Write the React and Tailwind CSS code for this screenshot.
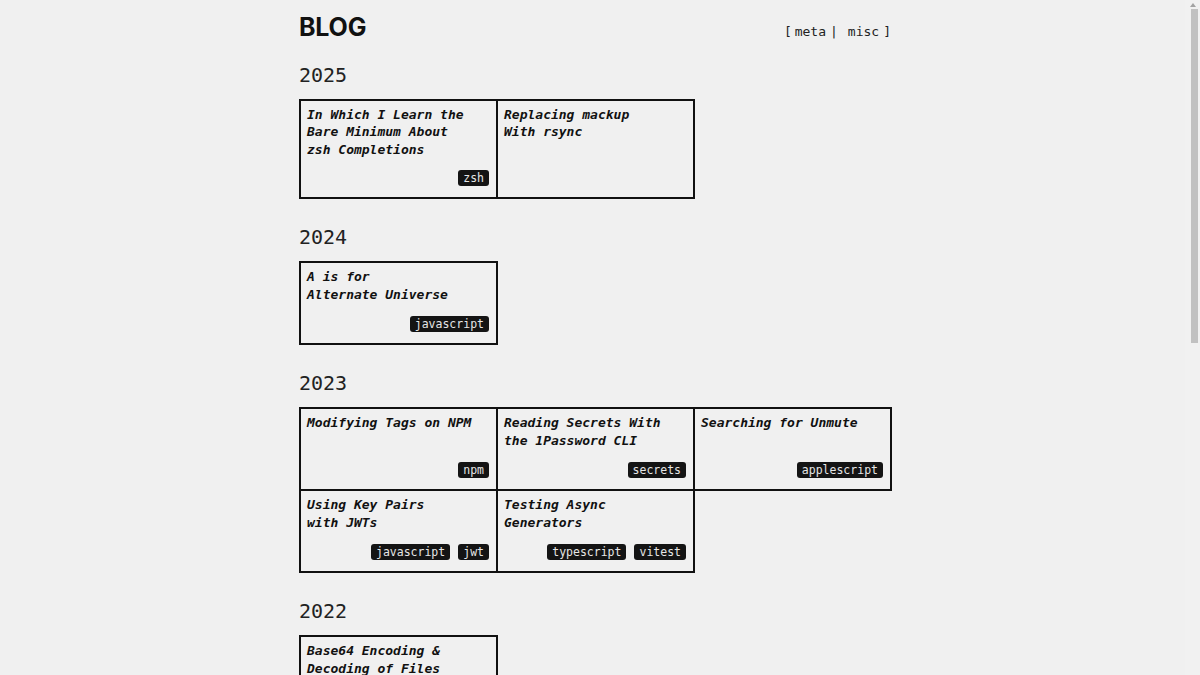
import React from 'react';

const mono = "font-['DejaVu_Sans_Mono',monospace]";

const years = [
  {
    year: '2025',
    posts: [
      { title: ['In Which I Learn the', 'Bare Minimum About', 'zsh Completions'], tags: ['zsh'] },
      { title: ['Replacing mackup', 'With rsync'], tags: [] },
    ],
  },
  {
    year: '2024',
    posts: [{ title: ['A is for', 'Alternate Universe'], tags: ['javascript'] }],
  },
  {
    year: '2023',
    posts: [
      { title: ['Modifying Tags on NPM'], tags: ['npm'] },
      { title: ['Reading Secrets With', 'the 1Password CLI'], tags: ['secrets'] },
      { title: ['Searching for Unmute'], tags: ['applescript'] },
      { title: ['Using Key Pairs', 'with JWTs'], tags: ['javascript', 'jwt'] },
      { title: ['Testing Async', 'Generators'], tags: ['typescript', 'vitest'] },
    ],
  },
  {
    year: '2022',
    posts: [{ title: ['Base64 Encoding &', 'Decoding of Files'], tags: ['base64'] }],
  },
];

const Tag = ({ name }) => (
  <span className={`${mono} h-[16px] rounded-[3px] bg-[#141414] px-[5px] text-[11.5px] leading-[16px] text-[#e6e6e6]`}>
    {name}
  </span>
);

const PostCard = ({ post }) => (
  <a
    href="#"
    className="-mb-[2px] -mr-[2px] flex min-h-[84px] flex-col justify-between border-2 border-[#111] pb-[11px] pl-[6px] pr-[7px] pt-[5px]"
  >
    <h3 className={`${mono} text-[13px] font-bold italic leading-[17.5px] text-[#111]`}>
      {post.title.map((line, i) => (
        <span key={i} className="block whitespace-nowrap">
          {line}
        </span>
      ))}
    </h3>
    {post.tags.length > 0 && (
      <div className="mt-[12px] flex justify-end gap-[8px]">
        {post.tags.map((t) => (
          <Tag key={t} name={t} />
        ))}
      </div>
    )}
  </a>
);

export default function App() {
  return (
    <div className="min-h-screen bg-[#f0f0f0] pr-[10px] text-[#111]">
      <div className="mx-auto w-[592px] pb-[600px] pt-[14px]">
        {/* Header */}
        <header className="flex items-baseline justify-between">
          <h1 className="font-['Inter',sans-serif] text-[25px] font-bold leading-[26px] tracking-[-0.2px]">BLOG</h1>
          <nav className={`${mono} flex items-baseline text-[13px] text-[#222]`}>
            <span>[</span>
            <a href="#" className="ml-[3px]">meta</a>
            <span className="ml-[4px]">|</span>
            <a href="#" className="ml-[10px]">misc</a>
            <span className="ml-[4px]">]</span>
          </nav>
        </header>

        {years.map((y, idx) => (
          <section key={y.year} className={idx === 0 ? 'mt-[23px]' : 'mt-[30px]'}>
            <h2 className={`${mono} mb-[14px] text-[20px] leading-[20px] text-[#222]`}>{y.year}</h2>
            <div className="grid grid-cols-[repeat(3,197px)]">
              {y.posts.map((p, i) => (
                <PostCard key={i} post={p} />
              ))}
            </div>
          </section>
        ))}
      </div>

      {/* scrollbar gutter */}
      <div className="fixed right-0 top-0 h-screen w-[15px] bg-[#f1f1f1]">
        <div className="mx-auto mt-[3px] h-0 w-0 border-x-[3px] border-b-[4px] border-x-transparent border-b-[#a3a3a3]" />
        <div className="absolute right-[2px] top-[9px] h-[334px] w-[7px] bg-[#c1c1c1]" />
      </div>
    </div>
  );
}
